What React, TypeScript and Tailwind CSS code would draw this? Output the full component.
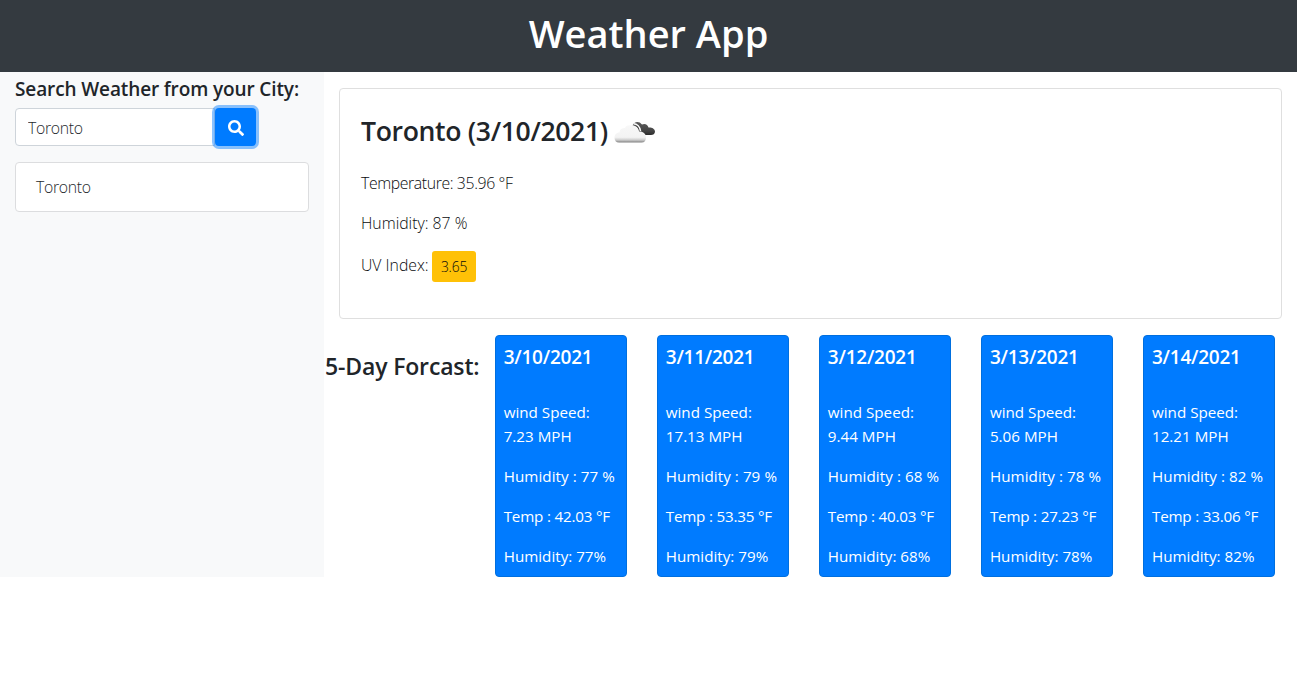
type Day = { date: string; wind: string; humidity: string; temp: string };

const days: Day[] = [
  { date: "3/10/2021", wind: "7.23", humidity: "77", temp: "42.03" },
  { date: "3/11/2021", wind: "17.13", humidity: "79", temp: "53.35" },
  { date: "3/12/2021", wind: "9.44", humidity: "68", temp: "40.03" },
  { date: "3/13/2021", wind: "5.06", humidity: "78", temp: "27.23" },
  { date: "3/14/2021", wind: "12.21", humidity: "82", temp: "33.06" },
];

function SearchIcon() {
  return (
    <svg viewBox="0 0 512 512" className="h-4 w-4 fill-white" aria-hidden="true">
      <path d="M505 442.7L405.3 343c-4.500-4.500-10.600-7-17-7H372c27.600-35.300 44-79.700 44-128C416 93.100 322.900 0 208 0S0 93.100 0 208s93.100 208 208 208c48.300 0 92.700-16.400 128-44v16.300c0 6.400 2.500 12.500 7 17l99.700 99.700c9.400 9.400 24.600 9.400 33.900 0l28.300-28.300c9.400-9.400 9.400-24.600.1-34zM208 336c-70.700 0-128-57.200-128-128 0-70.700 57.200-128 128-128 70.700 0 128 57.200 128 128 0 70.700-57.200 128-128 128z" />
    </svg>
  );
}

function CloudIcon() {
  return (
    <svg viewBox="0 0 42 24" className="mt-px h-6 w-[42px]" aria-hidden="true">
      <defs>
        <linearGradient id="pale" x1="0" y1="0" x2="0" y2="1">
          <stop offset="0" stopColor="#f8f8f8" />
          <stop offset="0.7" stopColor="#f3f3f3" />
          <stop offset="0.86" stopColor="#cccccc" />
          <stop offset="1" stopColor="#808080" />
        </linearGradient>
        <linearGradient id="dark" x1="0" y1="0" x2="0" y2="1">
          <stop offset="0" stopColor="#5b5b5b" />
          <stop offset="0.7" stopColor="#444444" />
          <stop offset="1" stopColor="#2b2b2b" />
        </linearGradient>
      </defs>
      <path d="M18.500 5.500C20 1.500 25 .5 28 4.500C31 3 34 5 34.500 7.500C37 7 41 8.500 41 11.500C41 14 39 15 37 15H29C27 15 26.500 12.500 25 11.500C24.500 8.500 22.500 6 18.500 5.500Z" fill="url(#dark)" />
      <path d="M19.500 3.800C23 3.800 26 6.500 26.500 11" fill="none" stroke="#fff" strokeWidth="1.500" />
      <path d="M5 22.500C2 22.500.5 20.500.5 17.500C.5 15 2.500 12.500 5.500 12.500C6 9 8 8 11 8C12 5.500 14.500 5 17.500 5.300C21.500 5.500 24.500 8 24.500 11.700C28.500 11 32 13.500 32 17.500C32 20.500 30.500 22.500 27.500 22.500Z" fill="url(#pale)" />
    </svg>
  );
}

function DayCard({ day }: { day: Day }) {
  return (
    <div className="h-[242px] w-[132.200px] shrink-0 rounded border border-[#006fdf] bg-[#007bff] py-2 pl-[8.200px] text-[15.200px] leading-6 whitespace-nowrap text-white">
      <h5 className="mt-px text-[19px] leading-6 font-semibold tracking-[-0.24px]">{day.date}</h5>
      <p className="mt-[31px]">
        wind Speed:
        <br />
        {day.wind} MPH
      </p>
      <p className="mt-4 tracking-[0.06px]">Humidity : {day.humidity} %</p>
      <p className="mt-4 tracking-[-0.2px]">Temp : {day.temp} °F</p>
      <p className="mt-4">Humidity: {day.humidity}%</p>
    </div>
  );
}

export default function App() {
  return (
    <div className="h-[697px] w-full overflow-hidden bg-white font-['Open_Sans',sans-serif] text-[15.800px] leading-6 font-light text-[#212529]">
      <header className="flex h-[72px] items-center justify-center bg-[#343a40] pb-1.5">
        <h1 className="text-[38px] leading-[48px] font-semibold whitespace-nowrap text-white">Weather App</h1>
      </header>
      <div className="flex h-[505px]">
        <aside className="w-[324px] shrink-0 bg-[#f8f9fa] px-[15px] pt-[5px]">
          <h5 className="text-[19px] leading-6 font-semibold tracking-[-0.12px] whitespace-nowrap">Search Weather from your City:</h5>
          <div className="mt-[7px] flex h-[38px]">
            <input
              className="w-[200px] rounded-l border border-[#ced4da] bg-white px-3 pt-0.5 text-[15.800px] font-light tracking-[-0.3px] text-[#24282c] outline-none"
              defaultValue="Toronto"
            />
            <button className="flex w-[41px] items-center justify-center rounded bg-[#007bff] pt-0.5 ring-3 ring-[#007bff]/45">
              <SearchIcon />
            </button>
          </div>
          <ul className="mt-4">
            <li className="h-[50px] rounded border border-[#dcdddf] bg-white px-5 py-3 tracking-[-0.3px] text-[#24282c]">Toronto</li>
          </ul>
        </aside>
        <main className="min-w-0 flex-1">
          <section className="mt-4 mr-[15px] ml-[15px] h-[231px] rounded border border-[#dfdfdf] bg-white px-[21px] pt-5 text-[#080a0c]">
            <div className="flex h-11 items-center gap-[6px] text-[#212529]">
              <h3 className="text-[26.600px] leading-[34px] font-semibold tracking-[-0.35px] whitespace-nowrap">Toronto (3/10/2021)</h3>
              <CloudIcon />
            </div>
            <p className="mt-[18px] tracking-[-0.38px]">Temperature: 35.96 °F</p>
            <p className="mt-4">Humidity: 87 %</p>
            <p className="mt-4 flex items-start">
              <span className="mt-0.5 w-[71px]">UV Index:</span>
              <span className="flex h-[31px] w-11 items-center justify-center rounded-[3px] bg-[#ffc107] text-[13.800px] leading-5 tracking-[-0.2px]">3.65</span>
            </p>
          </section>
          <section className="mt-4 flex font-normal">
            <h4 className="w-[170.500px] shrink-0 pt-[15px] pl-px text-[23px] leading-8 font-semibold tracking-[-0.15px] whitespace-nowrap">5-Day Forcast:</h4>
            <div className="flex gap-[29.900px]">
              {days.map((day) => (
                <DayCard key={day.date} day={day} />
              ))}
            </div>
          </section>
        </main>
      </div>
    </div>
  );
}
